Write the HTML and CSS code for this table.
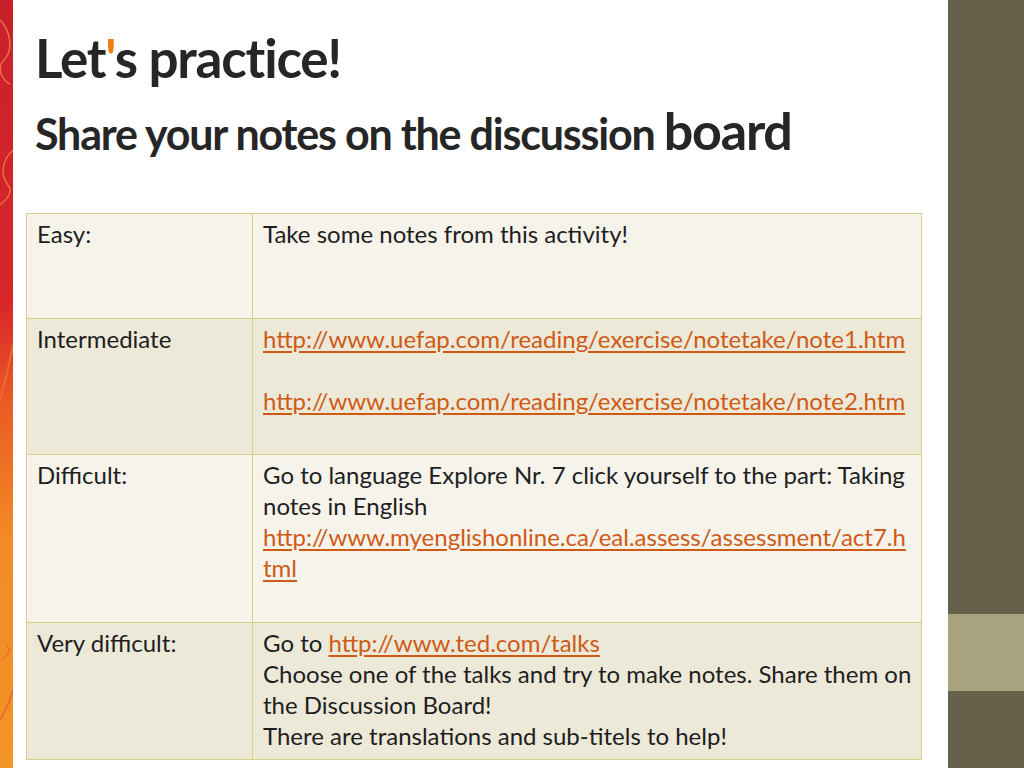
FILE: index.html
```html
<!DOCTYPE html>
<html>
<head>
<meta charset="utf-8">
<link rel="stylesheet" href="styles.css">
</head>
<body>
<div class="slide">
  <div class="strip-left">
    <svg class="swirls" width="13" height="768" viewBox="0 0 13 768" preserveAspectRatio="none">
      <defs>
        <linearGradient id="g" x1="0" y1="0" x2="0" y2="1">
          <stop offset="0" stop-color="#c8202a"/>
          <stop offset="0.4" stop-color="#d9272a"/>
          <stop offset="0.52" stop-color="#ea5a24"/>
          <stop offset="0.7" stop-color="#f28a25"/>
          <stop offset="1" stop-color="#f39426"/>
        </linearGradient>
      </defs>
      <rect width="13" height="768" fill="url(#g)"/>
      <path d="M0 20 C10 30 14 50 4 60 C-4 68 2 80 10 84" stroke="#e9704a" stroke-width="1.5" fill="none"/>
      <path d="M13 150 C2 160 0 175 8 185 C14 192 6 200 0 205" stroke="#e9704a" stroke-width="1.5" fill="none"/>
      <path d="M0 400 C6 380 10 360 13 345" stroke="#f06a30" stroke-width="2" fill="none"/>
      <path d="M0 720 C6 710 10 700 13 690" stroke="#ef6a2e" stroke-width="2" fill="none"/>
      <path d="M2 660 C8 655 12 650 6 645" stroke="#e9702e" stroke-width="1.2" fill="none"/>
    </svg>
  </div>
  <div class="main">
    <h1 class="title">Let<span class="apos">'</span>s practice!</h1>
    <h2 class="subtitle">Share your notes on the discussion <span class="big">board</span></h2>
    <table class="grid">
      <tr class="row r1 light">
        <td class="c1">Easy:</td>
        <td class="c2">Take some notes from this activity!</td>
      </tr>
      <tr class="row r2 dark">
        <td class="c1">Intermediate</td>
        <td class="c2"><a href="#">http://www.uefap.com/reading/exercise/notetake/note1.htm</a><br><br><a href="#">http://www.uefap.com/reading/exercise/notetake/note2.htm</a></td>
      </tr>
      <tr class="row r3 light">
        <td class="c1">Difficult:</td>
        <td class="c2">Go to language Explore Nr. 7 click yourself to the part: Taking<br>notes in English<br><a href="#">http://www.myenglishonline.ca/eal.assess/assessment/act7.h<br>tml</a></td>
      </tr>
      <tr class="row r4 dark">
        <td class="c1">Very difficult:</td>
        <td class="c2">Go to <a href="#">http://www.ted.com/talks</a><br>Choose one of the talks and try to make notes. Share them on<br>the Discussion Board!<br>There are translations and sub-titels to help!</td>
      </tr>
    </table>
  </div>
  <div class="strip-right">
    <div class="sr-top"></div>
    <div class="sr-mid"></div>
    <div class="sr-bot"></div>
  </div>
</div>
</body>
</html>
```

FILE: styles.css
```css
html, body {
  margin: 0;
  padding: 0;
  background: #ffffff;
}
.slide {
  width: 1024px;
  height: 768px;
  display: flex;
  overflow: hidden;
  font-family: Lato, "Open Sans", sans-serif;
  color: #262626;
}
.strip-left {
  width: 13px;
  flex: none;
}
.swirls {
  display: block;
}
.main {
  width: 935px;
  flex: none;
  display: flex;
  flex-direction: column;
}
.title {
  margin: 27px 0 0 22px;
  font-size: 53px;
  line-height: 62px;
  font-weight: 700;
  letter-spacing: -1.2px;
  color: #262626;
}
.apos {
  color: #f07c12;
}
.subtitle {
  margin: 13px 0 0 22px;
  height: 56px;
  font-size: 43px;
  line-height: 56px;
  font-weight: 700;
  letter-spacing: -1.2px;
  color: #262626;
}
.big {
  font-size: 52px;
}
.grid {
  margin: 55px 0 0 13px;
  width: 896px;
  table-layout: fixed;
  border-collapse: collapse;
  font-size: 24px;
  line-height: 31px;
  color: #1e1e1e;
}
.grid td {
  border: 1.5px solid #d8d089;
  vertical-align: top;
  padding: 4px 2px 0 10px;
  box-sizing: border-box;
}
.c1 {
  width: 226px;
}
.c2 {
  white-space: nowrap;
}
.light {
  background: #f5f3ea;
}
.dark {
  background: #ece9d8;
}
.r1 { height: 105px; }
.r2 { height: 136px; }
.r3 { height: 168px; }
.r4 { height: 137px; }
.grid a {
  color: #cf5a17;
  text-decoration: underline;
  text-underline-offset: 3px;
}
.strip-right {
  width: 76px;
  flex: none;
  display: flex;
  flex-direction: column;
}
.sr-top {
  height: 614px;
  background: #67604a;
}
.sr-mid {
  height: 77px;
  background: #a8a27f;
}
.sr-bot {
  flex: 1;
  background: #67604a;
}
```
